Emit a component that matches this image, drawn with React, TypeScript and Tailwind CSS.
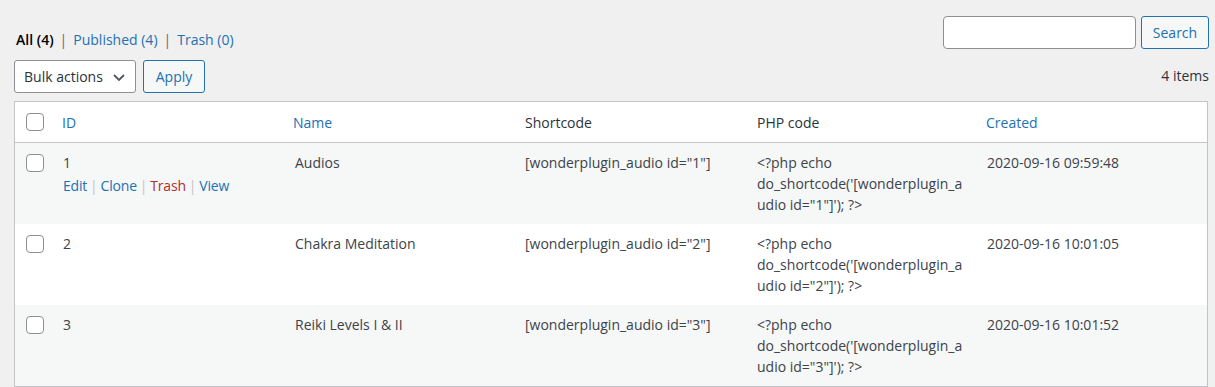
import React from "react";

const rows = [
  { id: "1", name: "Audios", created: "2020-09-16 09:59:48", actions: true },
  { id: "2", name: "Chakra Meditation", created: "2020-09-16 10:01:05" },
  { id: "3", name: "Reiki Levels I & II", created: "2020-09-16 10:01:52" },
];

function Check() {
  return <span className="block w-[18px] h-[18px] rounded-[4px] border border-[#8c8f94] bg-white" />;
}

const grid = "grid grid-cols-[37px_231px_232px_232px_230px_230px]";

export default function App() {
  return (
    <div
      className="w-[1215px] h-[387px] bg-[#f0f0f1] overflow-hidden text-[14px] text-[#3c434a]"
      style={{ fontFamily: '"Open Sans", "Noto Sans", sans-serif' }}
    >
      <div className="ml-[14px] w-[1195px] pt-[16px]">
        <div className="flex justify-between items-start h-[33px]">
          <div className="mt-[13px] ml-[2px] leading-[21px] text-[#646970]">
            <span className="text-black font-semibold">All (4)</span>
            <span className="mx-[6px]">|</span>
            <span className="text-[#2271b1]">Published (4)</span>
            <span className="mx-[6px]">|</span>
            <span className="text-[#2271b1]">Trash (0)</span>
          </div>
          <div className="flex gap-[5px] h-[33px]">
            <div className="w-[193px] h-[33px] bg-white border border-[#8c8f94] rounded-[4px]" />
            <div className="w-[68px] h-[33px] flex items-center justify-center border border-[#2271b1] rounded-[3px] bg-[#f6f7f7] text-[#2271b1]">
              Search
            </div>
          </div>
        </div>
        <div className="mt-[11px] flex justify-between items-center h-[33px]">
          <div className="flex gap-[7px] h-[33px]">
            <div className="w-[122px] h-[33px] flex items-center justify-between pl-[9px] pr-[9px] bg-white border border-[#8c8f94] rounded-[3px] text-[#2c3338]">
              <span>Bulk actions</span>
              <svg width="14" height="14" viewBox="0 0 14 14">
                <polyline points="2,5 7,10 12,5" fill="none" stroke="#50575e" strokeWidth="1.8" />
              </svg>
            </div>
            <div className="w-[62px] h-[33px] flex items-center justify-center border border-[#2271b1] rounded-[3px] bg-[#f6f7f7] text-[#2271b1]">
              Apply
            </div>
          </div>
          <div className="text-[#2c3338] mt-[-2px]">4 items</div>
        </div>
        <div className="mt-[8px] border border-[#c3c4c7] w-[1194px] bg-white">
          <div className={`${grid} h-[41px] items-center border-b border-[#c3c4c7] bg-white`}>
            <div className="pl-[11px]"><Check /></div>
            <div className="pl-[10px] text-[#2271b1]">ID</div>
            <div className="pl-[10px] text-[#2271b1]">Name</div>
            <div className="pl-[10px] text-[#2c3338]">Shortcode</div>
            <div className="pl-[10px] text-[#2c3338]">PHP code</div>
            <div className="pl-[9px] text-[#2271b1]">Created</div>
          </div>
          {rows.map((r, i) => (
            <div
              key={r.id}
              className={`${grid} h-[81px] py-[9px] leading-[21px] ${i % 2 === 0 ? "bg-[#f6f7f7]" : "bg-white"}`}
            >
              <div className="pl-[11px] pt-[2px]"><Check /></div>
              <div className="pl-[11px]">
                <div>{r.id}</div>
                {r.actions && (
                  <div className="mt-[2px] text-[#2271b1] tracking-[-0.2px]">
                    Edit<span className="text-[#c3c4c7] mx-[3px]">|</span>Clone
                    <span className="text-[#c3c4c7] mx-[3px]">|</span>
                    <span className="text-[#b32d2e]">Trash</span>
                    <span className="text-[#c3c4c7] mx-[3px]">|</span>View
                  </div>
                )}
              </div>
              <div className="pl-[12px]">{r.name}</div>
              <div className="pl-[10px]">[wonderplugin_audio id="{r.id}"]</div>
              <div className="pl-[10px]">
                <div>&lt;?php echo</div>
                <div>do_shortcode('[wonderplugin_a</div>
                <div>udio id="{r.id}"]'); ?&gt;</div>
              </div>
              <div className="pl-[10px]">{r.created}</div>
            </div>
          ))}
        </div>
      </div>
    </div>
  );
}
